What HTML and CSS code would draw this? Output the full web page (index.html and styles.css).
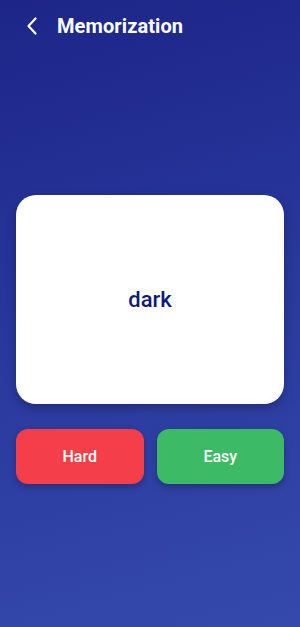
FILE: index.html
```html
<!DOCTYPE html>
<html lang="en">
<head>
  <meta charset="UTF-8" />
  <meta name="viewport" content="width=device-width, initial-scale=1.0"/>
  <title>Memorization</title>
  <link rel="stylesheet" href="styles.css">
</head>
<body>

  <!-- Top bar -->
  <header class="top-bar">
    <button class="back-btn" aria-label="Back">
      <svg width="12" height="18" viewBox="0 0 12 18" fill="none">
        <path d="M9.5 1.5 L2.5 9 L9.5 16.5" stroke="#ffffff" stroke-width="2.2" stroke-linecap="round" stroke-linejoin="round"/>
      </svg>
    </button>
    <h1 class="title">Memorization</h1>
  </header>

  <!-- Flashcard -->
  <main class="content">
    <div class="flashcard">
      <span class="word">dark</span>
    </div>

    <div class="answer-row">
      <button class="answer-btn answer-hard">Hard</button>
      <button class="answer-btn answer-easy">Easy</button>
    </div>
  </main>

</body>
</html>
```

FILE: styles.css
```css
:root {
  --bg-top: #1d2588;
  --bg-bottom: #3549ad;
  --card-text: #101a78;
  --hard: #f43f4a;
  --easy: #3dba66;
}

html, body {
  height: 100%;
}

body {
  margin: 0;
  font-family: Roboto, 'Noto Sans', sans-serif;
  background: linear-gradient(165deg, var(--bg-top) 0%, #2a3a9f 55%, var(--bg-bottom) 100%);
  color: white;
  overflow: hidden;
}

.top-bar {
  display: flex;
  align-items: center;
  height: 52px;
  padding-left: 22px;
  box-sizing: border-box;
}

.back-btn {
  background: none;
  border: none;
  padding: 0;
  width: 20px;
  height: 24px;
  display: flex;
  align-items: center;
  justify-content: center;
  cursor: pointer;
}

.title {
  margin: 0 0 0 15px;
  font-size: 20px;
  font-weight: 700;
  letter-spacing: 0.1px;
}

.content {
  padding: 143px 16px 0;
}

.flashcard {
  height: 209px;
  background: #ffffff;
  border-radius: 20px;
  display: flex;
  align-items: center;
  justify-content: center;
  box-shadow: 0 4px 10px rgba(0, 0, 0, 0.25);
}

.word {
  color: var(--card-text);
  font-size: 22px;
  font-weight: 500;
}

.answer-row {
  display: flex;
  gap: 13px;
  margin-top: 25px;
}

.answer-btn {
  flex: 1;
  height: 55px;
  border: none;
  border-radius: 12px;
  color: white;
  font-family: Roboto, 'Noto Sans', sans-serif;
  font-size: 16px;
  font-weight: 500;
  cursor: pointer;
  box-shadow: 0 3px 6px rgba(0, 0, 0, 0.25);
}

.answer-hard {
  background-color: var(--hard);
}

.answer-easy {
  background-color: var(--easy);
}
```
